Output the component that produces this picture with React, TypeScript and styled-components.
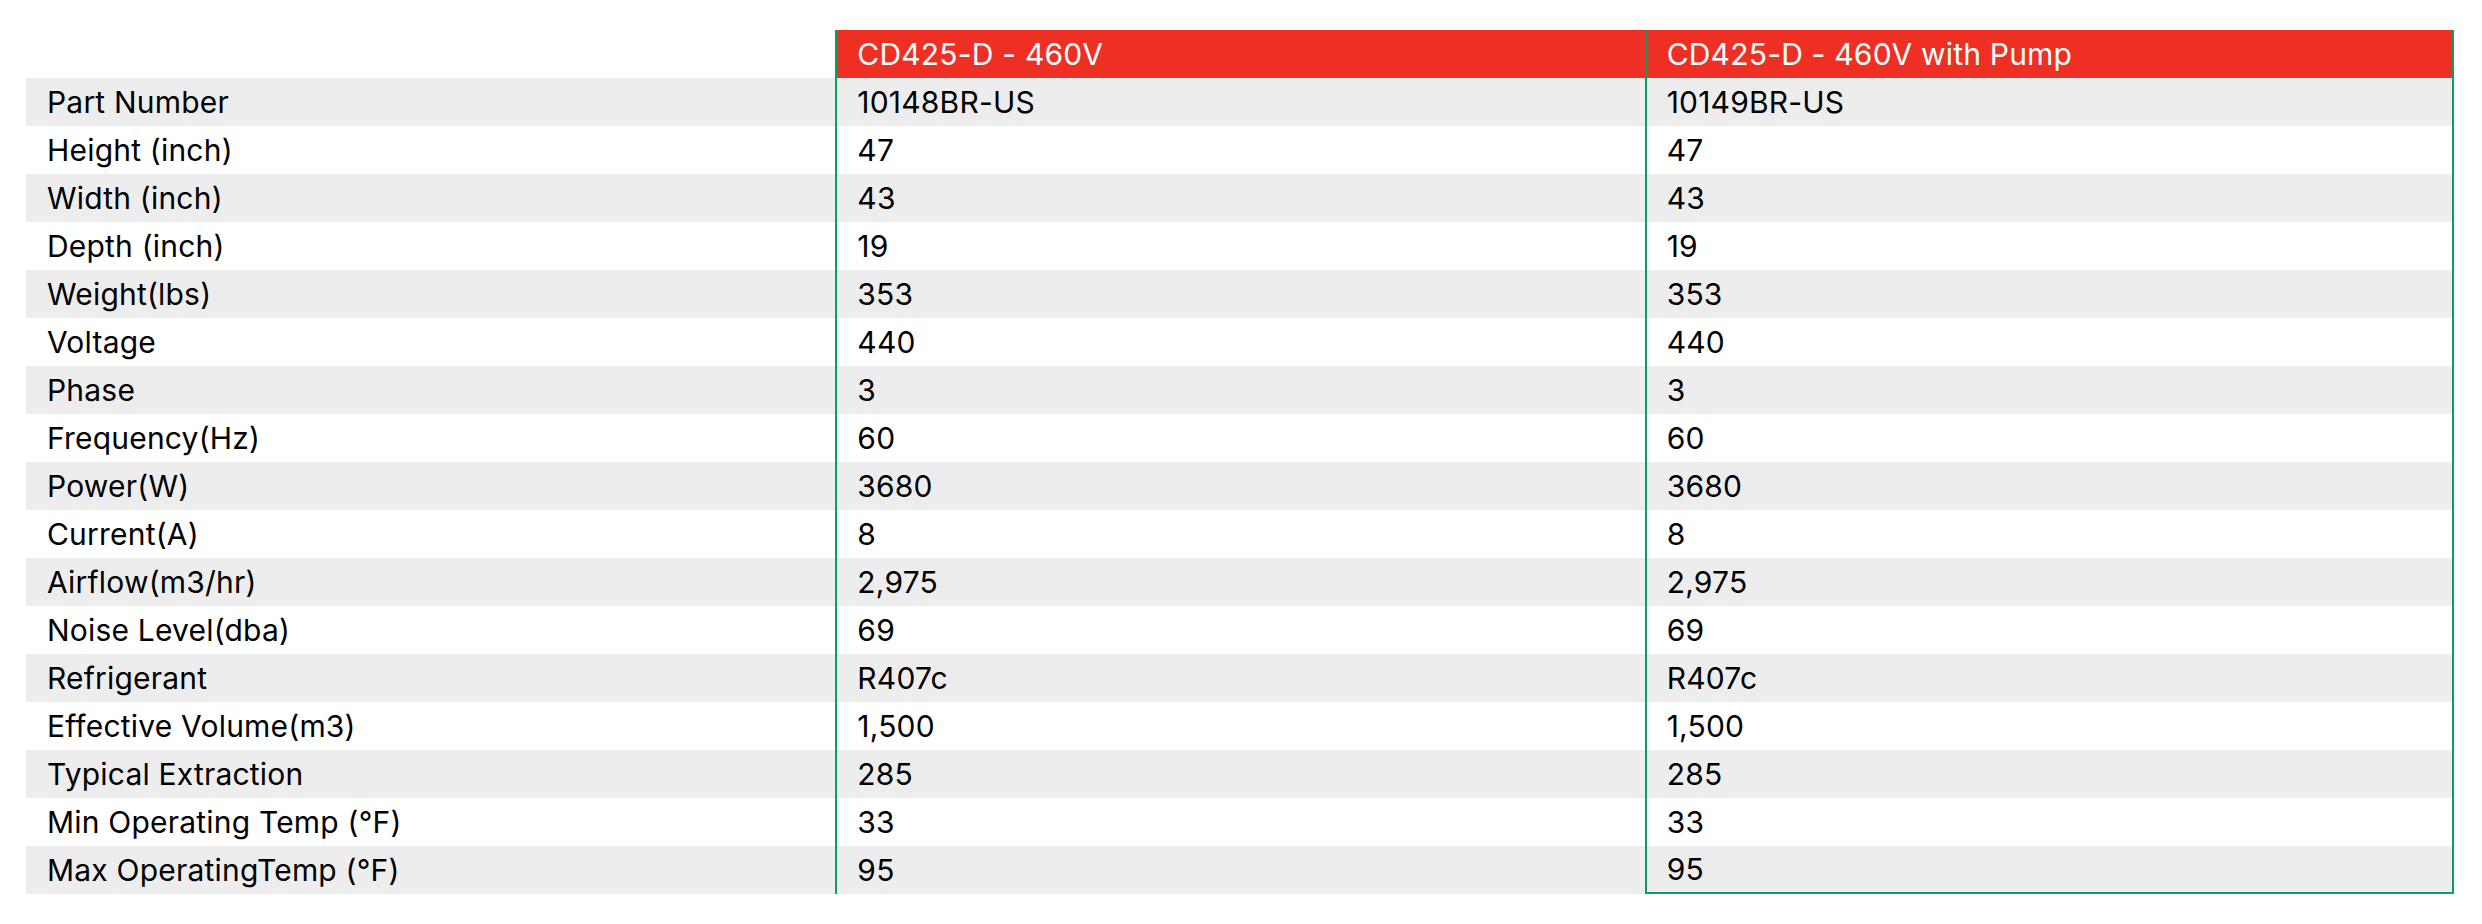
import React from "react";
import styled, { createGlobalStyle } from "styled-components";

const GlobalStyle = createGlobalStyle`
  body {
    margin: 0;
    background: #ffffff;
    font-family: "Inter", "Liberation Sans", sans-serif;
  }
`;

const Wrapper = styled.div`
  padding: 30px 28px 30px 26px;
`;

const Table = styled.table`
  width: 100%;
  table-layout: fixed;
  border-collapse: separate;
  border-spacing: 0;
  font-size: 30px;
  letter-spacing: 0.2px;
  color: #000000;
`;

const Row = styled.tr<{ $shaded: boolean }>`
  height: 48px;
  background: ${(p) => (p.$shaded ? "#ededed" : "#ffffff")};
`;

const Label = styled.td`
  padding: 0 0 0 21px;
  white-space: nowrap;
`;

const Cell = styled.td<{ $last?: boolean; $bottom?: boolean }>`
  padding: 0 0 0 20px;
  white-space: nowrap;
  border-left: 2px solid #0b9e5e;
  border-right: ${(p) => (p.$last ? "2px solid #0b9e5e" : "none")};
  border-bottom: ${(p) => (p.$bottom ? "2px solid #0b9e5e" : "none")};
`;

const Corner = styled.th`
  background: #ffffff;
`;

const Head = styled.th<{ $last?: boolean }>`
  height: 48px;
  padding: 0 0 0 20px;
  text-align: left;
  font-weight: 400;
  color: #ffffff;
  background: #ee3024;
  border-left: 2px solid #0b9e5e;
  border-right: ${(p) => (p.$last ? "2px solid #0b9e5e" : "none")};
`;

const models = ["CD425-D - 460V", "CD425-D - 460V with Pump"];

const specs: [string, string, string][] = [
  ["Part Number", "10148BR-US", "10149BR-US"],
  ["Height (inch)", "47", "47"],
  ["Width (inch)", "43", "43"],
  ["Depth (inch)", "19", "19"],
  ["Weight(lbs)", "353", "353"],
  ["Voltage", "440", "440"],
  ["Phase", "3", "3"],
  ["Frequency(Hz)", "60", "60"],
  ["Power(W)", "3680", "3680"],
  ["Current(A)", "8", "8"],
  ["Airflow(m3/hr)", "2,975", "2,975"],
  ["Noise Level(dba)", "69", "69"],
  ["Refrigerant", "R407c", "R407c"],
  ["Effective Volume(m3)", "1,500", "1,500"],
  ["Typical Extraction", "285", "285"],
  ["Min Operating Temp (°F)", "33", "33"],
  ["Max OperatingTemp (°F)", "95", "95"],
];

export default function App() {
  return (
    <>
      <GlobalStyle />
      <Wrapper>
        <Table>
          <thead>
            <tr>
              <Corner />
              {models.map((m, i) => (
                <Head key={m} $last={i === models.length - 1}>
                  {m}
                </Head>
              ))}
            </tr>
          </thead>
          <tbody>
            {specs.map(([label, a, b], i) => {
              const isLast = i === specs.length - 1;
              return (
                <Row key={label} $shaded={i % 2 === 0}>
                  <Label>{label}</Label>
                  <Cell>{a}</Cell>
                  <Cell $last $bottom={isLast}>
                    {b}
                  </Cell>
                </Row>
              );
            })}
          </tbody>
        </Table>
      </Wrapper>
    </>
  );
}
